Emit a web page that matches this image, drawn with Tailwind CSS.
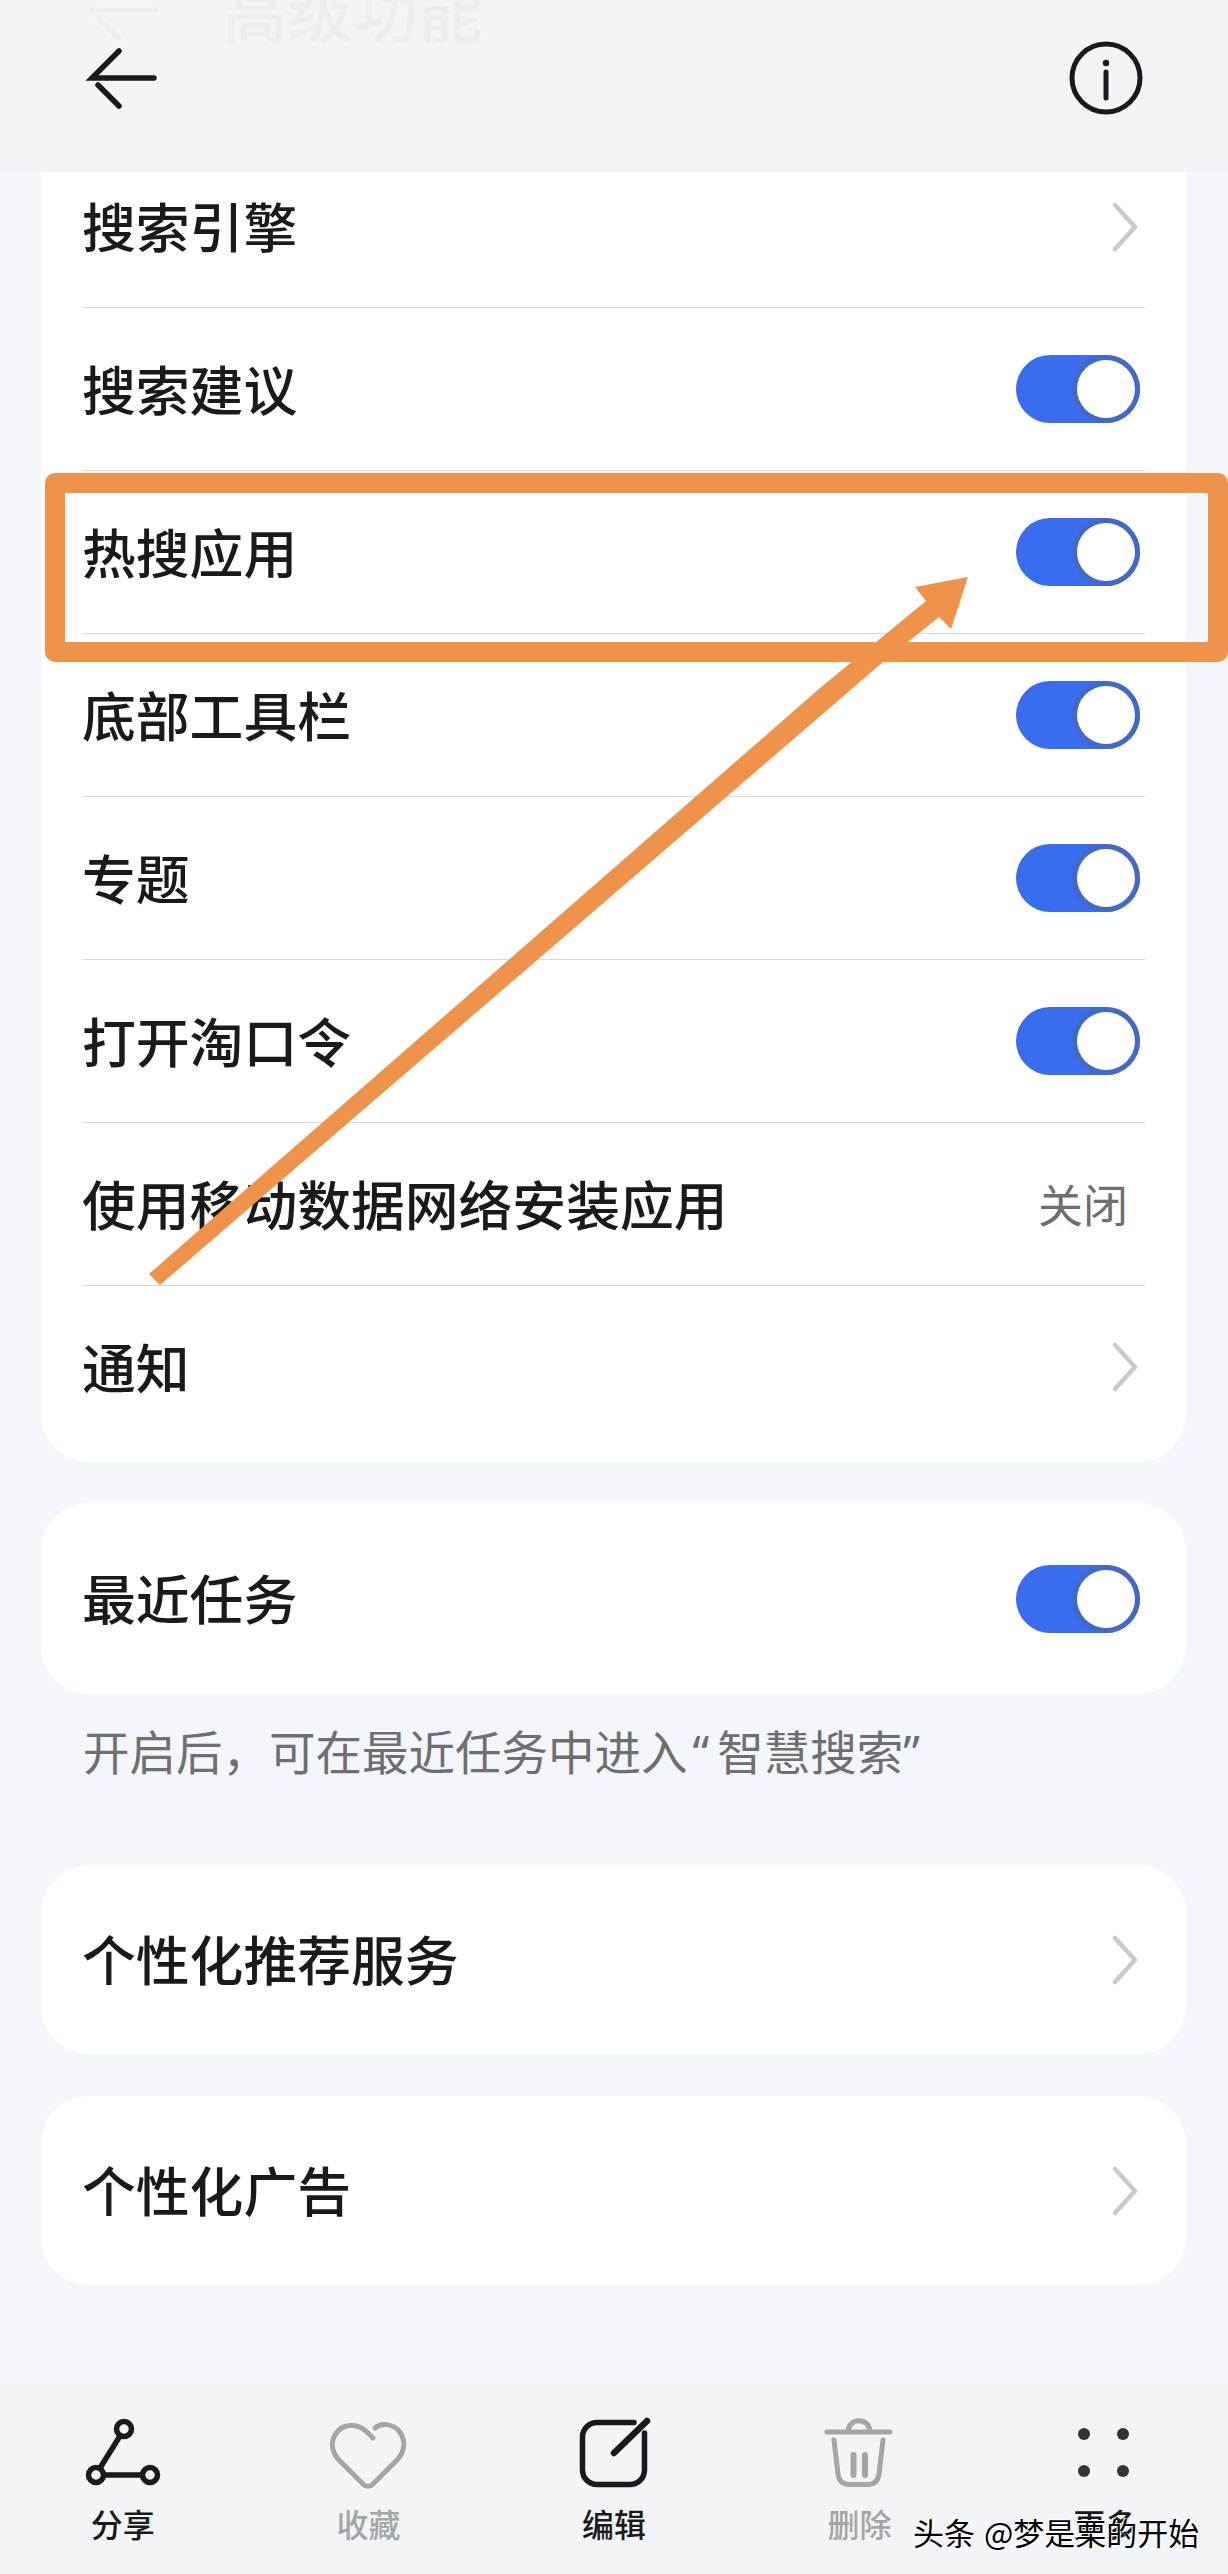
<!DOCTYPE html>
<html lang="zh-CN">
    <head>
        <meta charset="UTF-8" />
        <meta name="viewport" content="width=device-width, initial-scale=1.0" />
        <title>高级功能</title>
        <script src="https://cdn.jsdelivr.net/npm/@tailwindcss/browser@4"></script>
    </head>
    <body class="relative w-[1228px] h-[2574px] overflow-hidden bg-[#f3f6fb] text-[#1a1a1a] font-['Noto_Sans_CJK_SC','Noto_Sans',sans-serif]">
        <!-- header, with the ghost of the scrolled title behind it -->
        <header class="relative h-[172px] bg-[#f3f4f7] flex justify-between items-start pl-[85px] pr-[84px] pt-[40px]">
            <div class="absolute left-[223px] top-[-31px] text-[65px] leading-[80px] font-medium text-[#ecedf0]">高级功能</div>
            <svg class="absolute left-[85px] top-[-40px] w-[80px] h-[90px] text-[#ecedf0]" viewBox="0 0 80 90" fill="none" stroke="currentColor" stroke-width="5" stroke-linecap="round">
                <path d="M7 50H70M12 57L35 79" />
            </svg>
            <svg class="w-[80px] h-[76px]" viewBox="0 0 80 76" fill="none" stroke="#1a1a1a" stroke-width="5.5" stroke-linecap="round">
                <path d="M34 11L7 38H69M13 45L34 66" />
            </svg>
            <svg class="w-[76px] h-[76px]" viewBox="0 0 76 76" fill="none" stroke="#1a1a1a" stroke-width="5" stroke-linecap="round">
                <circle cx="38" cy="38" r="34" />
                <circle cx="38" cy="23" r="3.2" fill="#1a1a1a" stroke="none" />
                <path d="M38 32V58" />
            </svg>
        </header>

        <main class="pl-[41px] pr-[42px]">
            <section class="bg-white rounded-b-[48px] h-[1290px] flex flex-col">
                <div class="mx-[41px] h-[136px] pb-[26px] border-b border-[#d9d9d9] flex justify-between items-center text-[53.8px] font-medium">
                    <span class="pb-[2px]">搜索引擎</span>
                    <svg class="w-[32px] h-[52px] mr-[4px]" viewBox="0 0 32 52" fill="none" stroke="#cacaca" stroke-width="4.5" stroke-linecap="round" stroke-linejoin="round"><path d="M6 4L26 26L6 48" /></svg>
                </div>
                <div class="mx-[41px] h-[163px] border-b border-[#d9d9d9] flex justify-between items-center text-[53.8px] font-medium">
                    <span class="pb-[2px]">搜索建议</span>
                    <div class="w-[124px] h-[68px] mr-[5px] rounded-full bg-[#3a6cf0] flex items-center justify-end pr-[5px]"><div class="w-[58px] h-[58px] rounded-full bg-white ring-[5px] ring-[#4169c8]"></div></div>
                </div>
                <div class="mx-[41px] h-[163px] border-b border-[#d9d9d9] flex justify-between items-center text-[53.8px] font-medium">
                    <span class="pb-[2px]">热搜应用</span>
                    <div class="w-[124px] h-[68px] mr-[5px] rounded-full bg-[#3a6cf0] flex items-center justify-end pr-[5px]"><div class="w-[58px] h-[58px] rounded-full bg-white ring-[5px] ring-[#4169c8]"></div></div>
                </div>
                <div class="mx-[41px] h-[163px] border-b border-[#d9d9d9] flex justify-between items-center text-[53.8px] font-medium">
                    <span class="pb-[2px]">底部工具栏</span>
                    <div class="w-[124px] h-[68px] mr-[5px] rounded-full bg-[#3a6cf0] flex items-center justify-end pr-[5px]"><div class="w-[58px] h-[58px] rounded-full bg-white ring-[5px] ring-[#4169c8]"></div></div>
                </div>
                <div class="mx-[41px] h-[163px] border-b border-[#d9d9d9] flex justify-between items-center text-[53.8px] font-medium">
                    <span class="pb-[2px]">专题</span>
                    <div class="w-[124px] h-[68px] mr-[5px] rounded-full bg-[#3a6cf0] flex items-center justify-end pr-[5px]"><div class="w-[58px] h-[58px] rounded-full bg-white ring-[5px] ring-[#4169c8]"></div></div>
                </div>
                <div class="mx-[41px] h-[163px] border-b border-[#d9d9d9] flex justify-between items-center text-[53.8px] font-medium">
                    <span class="pb-[2px]">打开淘口令</span>
                    <div class="w-[124px] h-[68px] mr-[5px] rounded-full bg-[#3a6cf0] flex items-center justify-end pr-[5px]"><div class="w-[58px] h-[58px] rounded-full bg-white ring-[5px] ring-[#4169c8]"></div></div>
                </div>
                <div class="mx-[41px] h-[163px] border-b border-[#d9d9d9] flex justify-between items-center text-[53.8px] font-medium">
                    <span class="pb-[2px]">使用移动数据网络安装应用</span>
                    <span class="text-[45px] font-normal text-[#6f6f6f] mr-[17px]">关闭</span>
                </div>
                <div class="mx-[41px] h-[175px] pb-[13px] flex justify-between items-center text-[53.8px] font-medium">
                    <span class="pb-[2px]">通知</span>
                    <svg class="w-[32px] h-[52px] mr-[4px]" viewBox="0 0 32 52" fill="none" stroke="#cacaca" stroke-width="4.5" stroke-linecap="round" stroke-linejoin="round"><path d="M6 4L26 26L6 48" /></svg>
                </div>
            </section>

            <section class="mt-[41px] bg-white rounded-[48px] h-[191px] px-[41px] flex justify-between items-center text-[53.8px] font-medium">
                <span class="pb-[2px]">最近任务</span>
                <div class="w-[124px] h-[68px] mr-[5px] rounded-full bg-[#3a6cf0] flex items-center justify-end pr-[5px]"><div class="w-[58px] h-[58px] rounded-full bg-white ring-[5px] ring-[#4169c8]"></div></div>
            </section>
            <p class="mt-[26px] px-[42px] text-[46.5px] leading-[60px] text-[#6f6f6f] whitespace-nowrap">开启后，可在最近任务中进入<span class="font-['Noto_Sans'] pl-[5px] pr-[8px]">“</span>智慧搜索<span class="font-['Noto_Sans']">”</span></p>

            <section class="mt-[83px] bg-white rounded-[48px] h-[189px] px-[41px] flex justify-between items-center text-[53.8px] font-medium">
                <span class="pb-[2px]">个性化推荐服务</span>
                <svg class="w-[32px] h-[52px] mr-[4px]" viewBox="0 0 32 52" fill="none" stroke="#cacaca" stroke-width="4.5" stroke-linecap="round" stroke-linejoin="round"><path d="M6 4L26 26L6 48" /></svg>
            </section>
            <section class="mt-[42px] bg-white rounded-[48px] h-[189px] px-[41px] flex justify-between items-center text-[53.8px] font-medium">
                <span class="pb-[2px]">个性化广告</span>
                <svg class="w-[32px] h-[52px] mr-[4px]" viewBox="0 0 32 52" fill="none" stroke="#cacaca" stroke-width="4.5" stroke-linecap="round" stroke-linejoin="round"><path d="M6 4L26 26L6 48" /></svg>
            </section>
        </main>

        <nav class="mt-[98px] h-[191px] bg-[#f3f4f7] grid grid-cols-5 pt-[29px] text-[32px] leading-[40px] font-medium">
            <div class="flex flex-col items-center">
                <svg class="w-[90px] h-[80px]" viewBox="0 0 90 80" fill="none" stroke="#1a1a1a" stroke-width="5.5">
                    <circle cx="46" cy="17" r="7.5" />
                    <circle cx="18" cy="63" r="7.5" />
                    <circle cx="72" cy="63" r="7.5" />
                    <path d="M42 24L22 56M26 63H64" />
                </svg>
                <span class="mt-[11px]">分享</span>
            </div>
            <div class="flex flex-col items-center text-[#a5a5a5]">
                <svg class="w-[90px] h-[80px]" viewBox="0 0 90 80" fill="none" stroke="#a5a5a5" stroke-width="5" stroke-linecap="round">
                    <path d="M50 26L44 20C36 12 22 11 15 19C7 28 8 38 15 47L40 72C43 75 47 75 50 72L75 47C82 38 83 28 76 19C69 11 58 11 52 16" />
                </svg>
                <span class="mt-[11px]">收藏</span>
            </div>
            <div class="flex flex-col items-center">
                <svg class="w-[90px] h-[80px]" viewBox="0 0 90 80" fill="none" stroke="#1a1a1a" stroke-width="5.5" stroke-linecap="round">
                    <path d="M65 10.5H28A14.5 14.5 0 0 0 13.5 25V58A14.5 14.5 0 0 0 28 72.5H61A14.5 14.5 0 0 0 75.5 58V21" />
                    <path d="M45 41L78 9" stroke-width="6.5" />
                </svg>
                <span class="mt-[11px]">编辑</span>
            </div>
            <div class="flex flex-col items-center text-[#a5a5a5]">
                <svg class="w-[90px] h-[80px]" viewBox="0 0 90 80" fill="none" stroke="#a5a5a5" stroke-width="5" stroke-linecap="round">
                    <path d="M12 20H75M33 20C33 5 55 5 55 20" />
                    <path d="M19 28L23 62C24 69 28 72.5 34 72.5H53C59 72.5 63 69 64 62L68 28" />
                    <path d="M38.5 43V63M50 43V63" stroke-width="6" />
                </svg>
                <span class="mt-[11px]">删除</span>
            </div>
            <div class="flex flex-col items-center">
                <svg class="w-[90px] h-[80px]" viewBox="0 0 90 80" fill="#333333">
                    <circle cx="24" cy="22" r="6" />
                    <circle cx="63" cy="22" r="6" />
                    <circle cx="24" cy="59" r="6" />
                    <circle cx="63" cy="59" r="6" />
                </svg>
                <span class="mt-[11px]">更多</span>
            </div>
        </nav>

        <!-- annotations drawn over the screenshot -->
        <div class="absolute left-[45px] top-[473px] w-[1183px] h-[189px] border-[20px] border-[#ef934b] rounded-[10px]"></div>
        <svg class="absolute left-0 top-0 w-[1228px] h-[1300px]" viewBox="0 0 1228 1300">
            <polygon points="968,577 951,629 939,617 883,662 160,1285 149,1274 820,688 926,601 915,587" fill="#ef934b" />
        </svg>
        <div class="absolute left-[913px] top-[2512px] text-[31px] leading-[40px] whitespace-nowrap text-black [word-spacing:2px] [text-shadow:1px_1px_0_#fff,-1px_-1px_0_#fff]">头条 @梦是栗的开始</div>
    </body>
</html>
